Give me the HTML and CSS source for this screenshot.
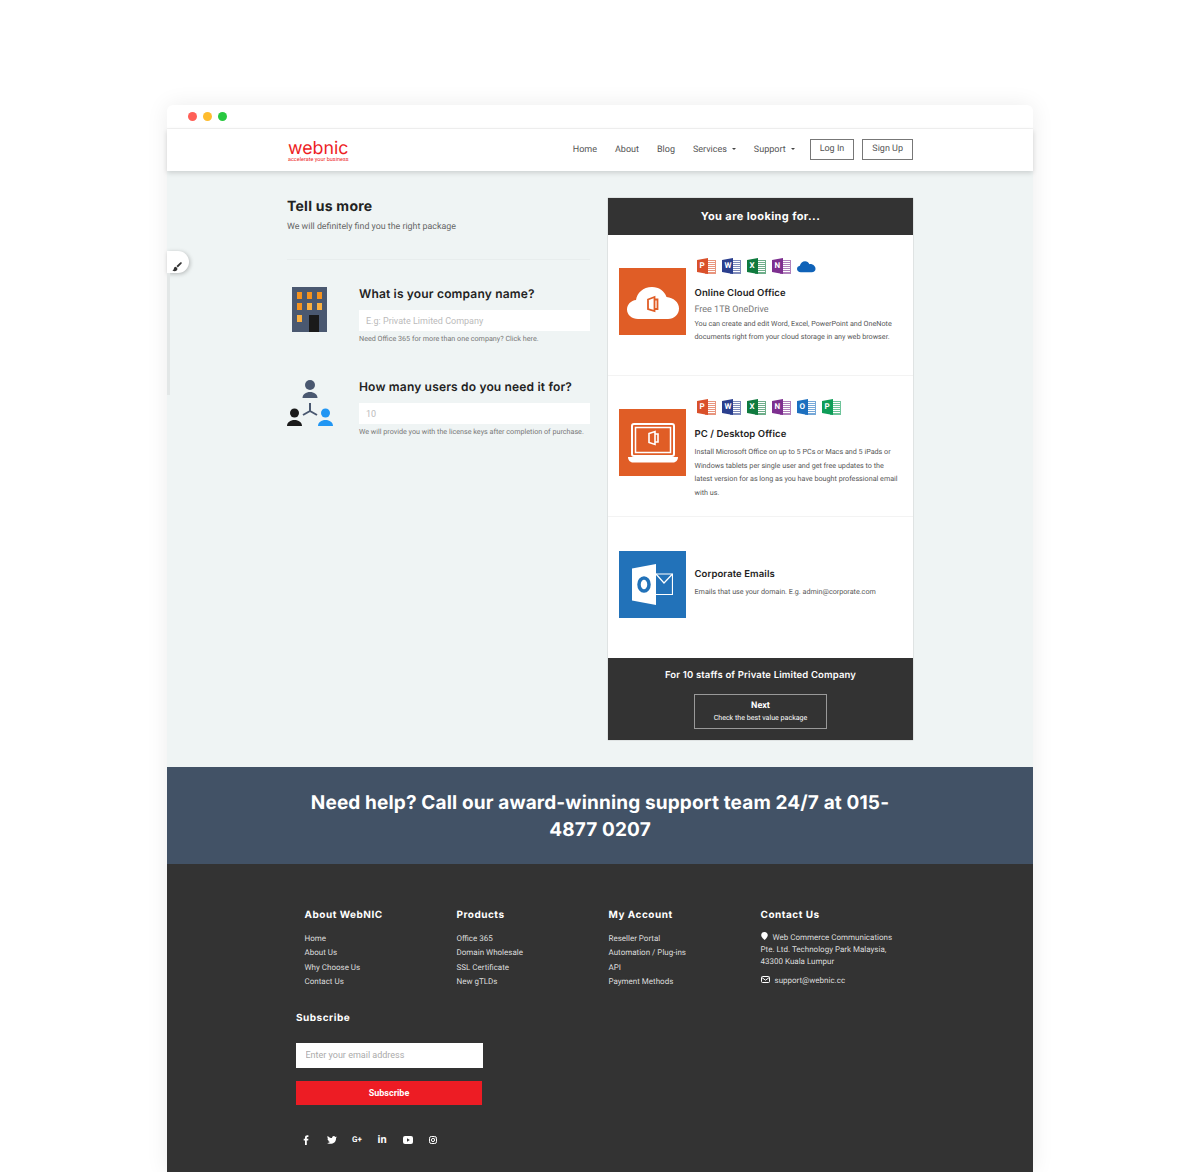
FILE: index.html

```html
<!DOCTYPE html>
<html lang="en">
<head>
  <meta charset="UTF-8">
  <title>WebNIC - Tell us more</title>
  <link rel="stylesheet" href="styles.css">
</head>
<body>
  <div class="window">
    <div class="titlebar">
      <span class="dot dot-red"></span>
      <span class="dot dot-yellow"></span>
      <span class="dot dot-green"></span>
    </div>

    <nav class="navbar">
      <div class="wrap nav-inner">
        <a class="logo">
          <span class="logo-name">webnic</span>
          <span class="logo-tag">accelerate your business</span>
        </a>
        <div class="nav-links">
          <a>Home</a>
          <a>About</a>
          <a>Blog</a>
          <a class="caret">Services</a>
          <a class="caret">Support</a>
          <a class="btn-outline btn-login">Log In</a>
          <a class="btn-outline">Sign Up</a>
        </div>
      </div>
    </nav>

    <main class="content">
      <div class="side-tab">
        <svg width="10" height="10" viewBox="0 0 10 10"><path d="M9.6.4c-.4-.4-1-.3-1.400.1L4.500 4.100l1.300 1.300 3.600-3.700c.4-.4.600-.9.200-1.300zM3.900 4.800C2.700 4.800 2 5.500 1.900 6.500 1.800 7.500 1.200 8 .4 8.200c1.200 1.200 3 1.300 4.200.4.900-.7 1-1.800.5-2.600z" fill="#333"/></svg>
      </div>
      <div class="side-strip"></div>

      <div class="wrap columns">
        <section class="form-col">
          <h1>Tell us more</h1>
          <p class="lead">We will definitely find you the right package</p>
          <hr>

          <div class="question">
            <div class="q-icon">
              <svg width="35" height="45" viewBox="0 0 35 45">
                <rect width="35" height="45" fill="#4a5870"/>
                <g fill="#f5921e">
                  <rect x="5" y="5" width="5" height="7"/><rect x="15" y="5" width="5" height="7"/><rect x="25" y="5" width="5" height="7"/>
                  <rect x="5" y="16" width="5" height="7"/><rect x="15" y="16" width="5" height="7" fill="#fbb040"/><rect x="25" y="16" width="5" height="7" fill="#fbb040"/>
                  <rect x="5" y="28" width="5" height="7" fill="#fbb040"/>
                </g>
                <rect x="17" y="28" width="10" height="17" fill="#1a1a1a"/>
              </svg>
            </div>
            <div class="q-body">
              <h2>What is your company name?</h2>
              <input class="q-input" type="text" placeholder="E.g: Private Limited Company">
              <p class="hint">Need Office 365 for more than one company? Click here.</p>
            </div>
          </div>

          <div class="question question-users">
            <div class="q-icon">
              <svg width="46" height="46" viewBox="0 0 46 46">
                <circle cx="23" cy="5" r="5" fill="#4a5870"/>
                <path d="M15.500 18c0-3.500 3.400-6 7.500-6s7.500 2.500 7.500 6z" fill="#4a5870"/>
                <circle cx="7.500" cy="33" r="4.500" fill="#1a1a1a"/>
                <path d="M0 46c0-3.500 3.300-6 7.500-6s7.500 2.500 7.500 6z" fill="#1a1a1a"/>
                <circle cx="38.500" cy="33" r="4.500" fill="#2196f3"/>
                <path d="M31 46c0-3.500 3.300-6 7.500-6s7.500 2.500 7.500 6z" fill="#2196f3"/>
                <path d="M23 23v8M23 31l-7 4M23 31l7 4" stroke="#4a5870" stroke-width="2" fill="none"/>
              </svg>
            </div>
            <div class="q-body">
              <h2>How many users do you need it for?</h2>
              <input class="q-input" type="text" placeholder="10">
              <p class="hint">We will provide you with the license keys after completion of purchase.</p>
            </div>
          </div>
        </section>

        <aside class="panel">
          <div class="panel-head">You are looking for...</div>

          <div class="offer">
            <div class="tile tile-orange">
              <svg class="cloud" width="52" height="32" viewBox="0 0 52 32">
                <path d="M11 32C5 32 0 28 0 22.500 0 17.500 4 13.500 9 13 10 6 16 0 25 0c7 0 12.500 4 14.500 10C46.500 10.500 52 15.500 52 21.500 52 27.500 47 32 41 32z" fill="#fff"/>
                <path d="M21 12.500l6.500-2.500v14l-6.500-2zM27.500 12.500h3v9.500h-3" fill="none" stroke="#e05d26" stroke-width="1.800"/>
              </svg>
            </div>
            <div class="offer-text">
              <div class="apps">
                <span class="app app-p">P</span>
                <span class="app app-w">W</span>
                <span class="app app-x">X</span>
                <span class="app app-n">N</span>
                <svg class="onedrive" width="19" height="13" viewBox="0 0 20 13"><path d="M4 12.500C1.800 12.500 0 11 0 9c0-1.700 1.300-3 3-3.300C3.500 3 6 1 8.500 1c2 0 3.800 1.100 4.500 3 3.500-.5 6.500 2 6.500 5 0 2-1.700 3.500-4 3.500z" fill="#0f62b8"/></svg>
              </div>
              <h3>Online Cloud Office</h3>
              <p class="offer-sub">Free 1TB OneDrive</p>
              <p class="offer-desc">You can create and edit Word, Excel, PowerPoint and OneNote documents right from your cloud storage in any web browser.</p>
            </div>
          </div>

          <div class="offer">
            <div class="tile tile-orange">
              <svg width="50" height="40" viewBox="0 0 50 40">
                <rect x="4" y="1" width="42" height="32" rx="2" fill="none" stroke="#fff" stroke-width="2"/>
                <rect x="7.500" y="4.500" width="35" height="25" fill="none" stroke="#fff" stroke-width="1.500"/>
                <path d="M21 10.500l6-2v13l-6-2zM27 11h3v8h-3" fill="none" stroke="#fff" stroke-width="1.600"/>
                <path d="M0 34h50c0 3-2 5.500-5 5.500H5C2 39.500 0 37 0 34z" fill="#fff"/>
              </svg>
            </div>
            <div class="offer-text">
              <div class="apps">
                <span class="app app-p">P</span>
                <span class="app app-w">W</span>
                <span class="app app-x">X</span>
                <span class="app app-n">N</span>
                <span class="app app-o">O</span>
                <span class="app app-s">P</span>
              </div>
              <h3>PC / Desktop Office</h3>
              <p class="offer-desc">Install Microsoft Office on up to 5 PCs or Macs and 5 iPads or Windows tablets per single user and get free updates to the latest version for as long as you have bought professional email with us.</p>
            </div>
          </div>

          <div class="offer offer-plain">
            <div class="tile tile-blue">
              <svg width="41" height="41" viewBox="0 0 41 41">
                <path d="M0 4.500L24 0v41L0 36.500z" fill="#fff"/>
                <ellipse cx="12" cy="20.500" rx="5" ry="6.500" fill="none" stroke="#2272b9" stroke-width="3.500"/>
                <path d="M24 10h16.500v20.500H24" fill="none" stroke="#fff" stroke-width="1.200"/>
                <path d="M24 10l8 9 8.500-9" fill="none" stroke="#fff" stroke-width="1.200"/>
              </svg>
            </div>
            <div class="offer-text">
              <h3>Corporate Emails</h3>
              <p class="offer-desc">Emails that use your domain. E.g. admin@corporate.com</p>
            </div>
          </div>

          <div class="panel-foot">
            <p class="summary">For 10 staffs of Private Limited Company</p>
            <a class="btn-next">
              <strong>Next</strong>
              <span>Check the best value package</span>
            </a>
          </div>
        </aside>
      </div>
    </main>

    <section class="help">
      <h2>Need help? Call our award-winning support team 24/7 at 015-4877 0207</h2>
    </section>

    <footer class="footer">
      <div class="wrap">
        <div class="foot-cols">
          <div class="foot-col">
            <h4>About WebNIC</h4>
            <a>Home</a>
            <a>About Us</a>
            <a>Why Choose Us</a>
            <a>Contact Us</a>
          </div>
          <div class="foot-col">
            <h4>Products</h4>
            <a>Office 365</a>
            <a>Domain Wholesale</a>
            <a>SSL Certificate</a>
            <a>New gTLDs</a>
          </div>
          <div class="foot-col">
            <h4>My Account</h4>
            <a>Reseller Portal</a>
            <a>Automation / Plug-ins</a>
            <a>API</a>
            <a>Payment Methods</a>
          </div>
          <div class="foot-col foot-contact">
            <h4>Contact Us</h4>
            <p class="address">
              <svg class="pin" width="7" height="8" viewBox="0 0 7 8"><path d="M3.500 0C1.600 0 .2 1.400.2 3.200.2 5 2.400 7 3.500 8 4.600 7 6.800 5 6.800 3.200 6.800 1.400 5.400 0 3.500 0z" fill="#fff"/></svg>Web Commerce Communications Pte. Ltd. Technology Park Malaysia, 43300 Kuala Lumpur
            </p>
            <p class="mail">
              <svg width="9" height="7" viewBox="0 0 9 7"><rect x=".5" y=".5" width="8" height="6" rx="1" fill="none" stroke="#fff"/><path d="M.8 1.500l3.700 2.700 3.700-2.700" fill="none" stroke="#fff"/></svg>support@webnic.cc
            </p>
          </div>
        </div>

        <div class="subscribe">
          <h4>Subscribe</h4>
          <input class="sub-input" type="text" placeholder="Enter your email address">
          <button class="sub-btn">Subscribe</button>
        </div>

        <div class="socials">
          <a><svg width="10" height="10" viewBox="0 0 10 10"><path d="M4 10V5.500H2.700V3.800H4V2.600C4 1 5 .2 6.300.2h1.100v1.700h-.8c-.6 0-.8.3-.8.8v1.100h1.600L7.200 5.500H5.800V10z" fill="#fff"/></svg></a>
          <a><svg width="10" height="10" viewBox="0 0 10 10"><path d="M10 2.200c-.4.200-.8.300-1.200.3.400-.3.800-.7.900-1.100-.4.200-.8.400-1.300.5C7.200.3 5.100.9 5 3 3.300 2.900 1.800 2.100.7 .9c-.6 1-.3 2.200.6 2.800-.3 0-.6-.1-.9-.3 0 1 .7 1.900 1.600 2.100-.3.100-.6.100-.9 0 .3.900 1.100 1.400 1.900 1.500C2.100 7.700 1 8 0 7.900 4.500 10.500 9.400 7.500 9 3.200c.4-.3.700-.6 1-1z" fill="#fff"/></svg></a>
          <a class="gplus">G+</a>
          <a class="linkedin">in</a>
          <a><svg width="10" height="8" viewBox="0 0 10 8"><rect width="10" height="8" rx="2" fill="#fff"/><path d="M4 2.300L6.800 4 4 5.700z" fill="#333"/></svg></a>
          <a><svg width="8" height="8" viewBox="0 0 8 8"><rect x=".5" y=".5" width="7" height="7" rx="1.800" fill="none" stroke="#fff"/><circle cx="4" cy="4" r="1.600" fill="none" stroke="#fff"/><circle cx="6" cy="2" r=".5" fill="#fff"/></svg></a>
        </div>
      </div>
    </footer>
  </div>
</body>
</html>
```

FILE: styles.css

```css
* {
  box-sizing: border-box;
}

html, body {
  height: 1172px;
  overflow: hidden;
}

body {
  margin: 0;
  padding: 105px 167px 0;
  background: #fff;
  font-family: Roboto, "Liberation Sans", sans-serif;
  color: #555;
  text-rendering: geometricPrecision;
}

h1, h2, h3, h4, p {
  margin: 0;
}

.window {
  width: 866px;
  border-radius: 6px 6px 0 0;
  background: #fff;
  box-shadow: 0 0 22px rgba(0, 0, 0, 0.08);
}

.wrap {
  width: 626px;
  margin: 0 auto;
}

.titlebar {
  height: 24px;
  padding: 7px 0 0 21px;
  display: flex;
  gap: 6px;
  border-bottom: 1px solid #f3f3f3;
}

.dot {
  width: 9px;
  height: 9px;
  border-radius: 50%;
}

.dot-red { background: #ff5f57; }
.dot-yellow { background: #febc2e; }
.dot-green { background: #28c840; }

.navbar {
  position: relative;
  z-index: 1;
  height: 42px;
  background: #fff;
  box-shadow: 0 2px 5px rgba(0, 0, 0, 0.15);
}

.nav-inner {
  height: 42px;
  display: flex;
  justify-content: space-between;
  align-items: center;
}

.logo {
  display: flex;
  flex-direction: column;
  padding: 3px 0 0 1px;
  color: #ed1c24;
}

.logo-name {
  height: 17px;
  font-family: Inter, sans-serif;
  font-size: 17.800px;
  font-weight: 400;
  line-height: 17px;
}

.logo-tag {
  height: 6px;
  font-size: 5.500px;
  line-height: 6px;
  white-space: nowrap;
}

.nav-links {
  display: flex;
  align-items: center;
  margin-top: -1px;
  font-size: 9px;
  color: #555;
}

.nav-links a {
  margin-right: 18px;
}

.caret::after {
  content: "";
  display: inline-block;
  margin-left: 5px;
  vertical-align: 2px;
  border: 2.500px solid transparent;
  border-top-color: #444;
  border-bottom: 0;
}

.nav-links .btn-outline {
  height: 21px;
  line-height: 19px;
  padding: 0 9px;
  border: 1px solid #777;
  margin-right: 0;
}

.nav-links .btn-login {
  margin: 0 8px 0 -3px;
}

.content {
  position: relative;
  height: 596px;
  padding-top: 27px;
  background: #eff4f4;
}

.side-tab {
  position: absolute;
  left: 0;
  top: 80px;
  width: 22px;
  height: 22px;
  padding: 6px 0 0 5px;
  background: #fff;
  border-radius: 0 11px 11px 0;
  box-shadow: 1px 1px 4px rgba(0, 0, 0, 0.25);
}

.side-strip {
  position: absolute;
  left: 0;
  top: 102px;
  width: 3px;
  height: 122px;
  background: #e3e7e7;
}

.columns {
  display: flex;
  justify-content: space-between;
  align-items: flex-start;
}

.form-col {
  width: 303px;
}

.form-col h1 {
  font-family: Inter, sans-serif;
  font-size: 14px;
  font-weight: 700;
  line-height: 17px;
  letter-spacing: 0.25px;
  color: #222;
}

.lead {
  margin-top: 6px;
  font-size: 8.850px;
  line-height: 12px;
  color: #666;
}

.form-col hr {
  margin: 26px 0 0;
  border: 0;
  border-top: 1px solid #e8eded;
}

.question {
  display: flex;
  margin-top: 27px;
}

.question-users {
  margin-top: 36px;
}

.q-icon {
  width: 72px;
  padding: 0 0 0 5px;
}

.question-users .q-icon {
  padding: 0;
}

.q-body {
  flex: 1;
}

.q-body h2 {
  font-family: Inter, sans-serif;
  font-size: 12px;
  font-weight: 600;
  line-height: 14px;
  letter-spacing: 0.17px;
  color: #222;
}

.q-input {
  display: block;
  width: 100%;
  height: 21px;
  margin-top: 9px;
  padding: 0 7px;
  border: 0;
  background: #fff;
  font-family: Roboto, sans-serif;
  font-size: 9px;
}

.q-input::placeholder {
  color: #bbb;
}

.hint {
  margin-top: 3px;
  font-size: 7.200px;
  line-height: 10px;
  color: #777;
  white-space: nowrap;
}

.panel {
  width: 305px;
  background: #fff;
  box-shadow: 0 0 1px rgba(0, 0, 0, 0.4);
}

.panel-head {
  height: 37px;
  line-height: 37px;
  background: #333;
  color: #fff;
  text-align: center;
  font-family: Inter, sans-serif;
  font-size: 11px;
  font-weight: 700;
  letter-spacing: 0.4px;
}

.offer {
  height: 141px;
  display: flex;
  align-items: center;
  padding: 0 11px 7px;
  border-bottom: 1px solid #f3f3f3;
}

.offer-plain {
  border-bottom: 0;
}

.tile {
  flex: none;
  width: 67px;
  height: 67px;
  display: flex;
  align-items: center;
  justify-content: center;
}

.tile-orange { background: #e05d26; }
.tile-blue { background: #2272b9; }

.cloud {
  margin-top: 3px;
}

.offer-text {
  align-self: flex-start;
  flex: 1;
  margin-left: 8.500px;
  padding-top: 23px;
}

.apps {
  height: 16px;
  display: flex;
  gap: 8px;
  align-items: center;
  margin: 0 0 12.500px 2.500px;
}

.app {
  --c: #d9502a;
  position: relative;
  z-index: 0;
  width: 17px;
  height: 16px;
  padding-left: 2.500px;
  font-size: 8px;
  font-weight: 700;
  line-height: 16px;
  color: #fff;
}

.app::before {
  content: "";
  position: absolute;
  z-index: -1;
  left: 0;
  top: 0;
  width: 11px;
  height: 16px;
  background: var(--c);
  clip-path: polygon(0 12%, 100% 0, 100% 100%, 0 88%);
}

.app::after {
  content: "";
  position: absolute;
  z-index: -2;
  left: 8px;
  top: 2px;
  width: 9px;
  height: 12px;
  border: 1px solid var(--c);
  background: repeating-linear-gradient(#fff 0, #fff 1px, var(--c) 1px, var(--c) 2px);
  opacity: 0.6;
}

.app-w { --c: #2b3f8e; }
.app-x { --c: #0f7a3e; }
.app-n { --c: #7d2f8f; }
.app-o { --c: #1c6fbf; }
.app-s { --c: #0f9d58; }

.offer-plain .offer-text {
  padding-top: 51px;
}

.offer h3 {
  font-family: Inter, sans-serif;
  font-size: 9.500px;
  font-weight: 600;
  line-height: 14px;
  letter-spacing: 0.1px;
  color: #222;
}

.offer-sub {
  margin-top: 3px;
  font-size: 9px;
  line-height: 13px;
  color: #777;
}

.offer-desc {
  margin-top: 3.500px;
  font-size: 7.200px;
  line-height: 13.500px;
  color: #555;
}

.offer-sub + .offer-desc {
  margin-top: 0;
}

.offer-plain .offer-desc {
  margin-top: 3px;
}

.panel-foot {
  height: 82px;
  padding-top: 12px;
  background: #333;
  text-align: center;
}

.summary {
  font-family: Inter, sans-serif;
  font-size: 9.500px;
  font-weight: 600;
  line-height: 12px;
  letter-spacing: 0.15px;
  color: #fff;
}

.btn-next {
  display: block;
  width: 133px;
  height: 35px;
  margin: 12px auto 0;
  padding-top: 6px;
  border: 1px solid #999;
  color: #fff;
}

.btn-next strong {
  display: block;
  font-size: 9px;
  line-height: 11px;
}

.btn-next span {
  display: block;
  font-size: 7.100px;
  line-height: 11px;
}

.help {
  height: 97px;
  padding: 22px 0 0;
  background: #425266;
}

.help h2 {
  width: 600px;
  margin: 0 auto;
  font-family: Inter, sans-serif;
  font-size: 19px;
  font-weight: 700;
  line-height: 27px;
  letter-spacing: 0.14px;
  color: #fff;
  text-align: center;
}

.footer {
  height: 308px;
  padding-top: 45px;
  background: #333;
  color: #ddd;
  overflow: hidden;
}

.foot-cols {
  display: grid;
  grid-template-columns: repeat(4, 152px);
  margin-left: 17.500px;
}

.foot-col h4, .subscribe h4 {
  font-family: Inter, sans-serif;
  font-size: 10px;
  font-weight: 700;
  line-height: 12px;
  letter-spacing: 0.5px;
  color: #fff;
}

.foot-col h4 {
  margin-bottom: 11px;
}

.foot-col a {
  display: block;
  font-size: 8px;
  line-height: 14.400px;
}

.address {
  max-width: 134px;
  margin-top: 1px;
  font-size: 8px;
  line-height: 12px;
}

.pin {
  margin: 0 5px 0 0;
}

.mail {
  margin-top: 7px;
  font-size: 8px;
  line-height: 12px;
}

.mail svg {
  margin-right: 5px;
}

.subscribe {
  margin: 22px 0 0 9px;
}

.sub-input {
  display: block;
  width: 187px;
  height: 25px;
  margin-top: 19px;
  padding: 0 9.500px;
  border: 0;
  background: #fff;
  font-family: Roboto, sans-serif;
  font-size: 9px;
}

.sub-input::placeholder {
  color: #aaa;
}

.sub-btn {
  display: block;
  width: 186px;
  height: 24px;
  margin-top: 13px;
  padding: 0;
  border: 0;
  background: #ed1c24;
  color: #fff;
  font-family: Roboto, sans-serif;
  font-size: 9px;
  font-weight: 700;
}

.socials {
  display: flex;
  margin: 30px 0 0 14px;
  align-items: center;
}

.socials a {
  width: 25.500px;
  display: flex;
  justify-content: flex-start;
  font-family: Roboto, sans-serif;
  font-size: 8px;
  font-weight: 700;
  color: #fff;
}

.socials .linkedin {
  font-size: 11px;
  line-height: 10px;
}
```
